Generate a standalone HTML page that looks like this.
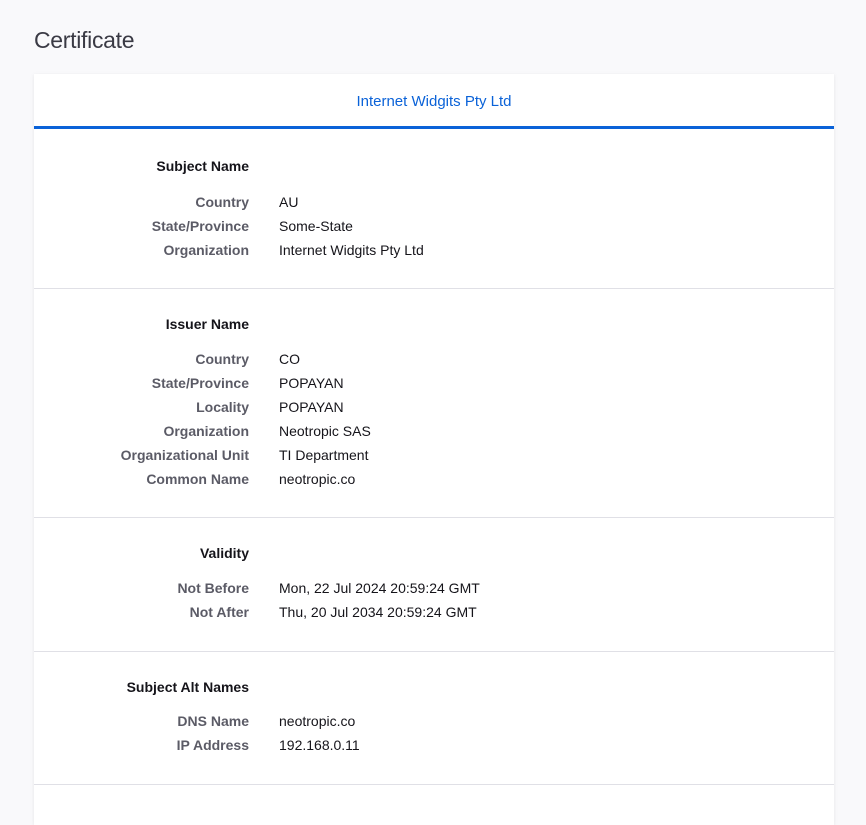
<!DOCTYPE html>
<html><head><meta charset="utf-8"><style>
html,body{margin:0;padding:0;background:#f9f9fb;width:866px;height:789px;overflow:hidden;font-family:"Liberation Sans",sans-serif;}
h1{position:absolute;left:34px;top:25px;margin:0;font-size:23px;font-weight:300;color:#3a3a44;line-height:30px;letter-spacing:-0.3px}
.card{position:absolute;left:34px;top:74px;width:800px;background:#fff;box-shadow:0 1px 4px rgba(0,0,0,0.08);}
.tab{height:52px;line-height:56px;text-align:center;color:#0a62d8;font-size:15px;border-bottom:3px solid #0a62d8;}
.sec{border-bottom:1px solid #e0e0e6;padding:25px 0 26px;}
.sec.s1{padding-top:27px}
.hd{height:20px;line-height:20px;font-size:14px;font-weight:bold;color:#15141a;width:215px;text-align:right;margin-bottom:13px}
.s1 .hd{margin-bottom:14px}
.s4 .hd{margin-bottom:12px}
.s3,.s4{padding-bottom:27px}
.row{height:24px;line-height:24px;font-size:14px;display:flex}
.l{width:215px;text-align:right;font-weight:bold;color:#5b5b66}
.v{margin-left:30px;color:#15141a}
</style></head><body>
<h1>Certificate</h1>
<div class="card">
<div class="tab">Internet Widgits Pty Ltd</div>
<div class="sec s1"><div class="hd">Subject Name</div>
<div class="row"><div class="l">Country</div><div class="v">AU</div></div>
<div class="row"><div class="l">State/Province</div><div class="v">Some-State</div></div>
<div class="row"><div class="l">Organization</div><div class="v">Internet Widgits Pty Ltd</div></div>
</div>
<div class="sec s2"><div class="hd">Issuer Name</div>
<div class="row"><div class="l">Country</div><div class="v">CO</div></div>
<div class="row"><div class="l">State/Province</div><div class="v">POPAYAN</div></div>
<div class="row"><div class="l">Locality</div><div class="v">POPAYAN</div></div>
<div class="row"><div class="l">Organization</div><div class="v">Neotropic SAS</div></div>
<div class="row"><div class="l">Organizational Unit</div><div class="v">TI Department</div></div>
<div class="row"><div class="l">Common Name</div><div class="v">neotropic.co</div></div>
</div>
<div class="sec s3"><div class="hd">Validity</div>
<div class="row"><div class="l">Not Before</div><div class="v">Mon, 22 Jul 2024 20:59:24 GMT</div></div>
<div class="row"><div class="l">Not After</div><div class="v">Thu, 20 Jul 2034 20:59:24 GMT</div></div>
</div>
<div class="sec s4"><div class="hd">Subject Alt Names</div>
<div class="row"><div class="l">DNS Name</div><div class="v">neotropic.co</div></div>
<div class="row"><div class="l">IP Address</div><div class="v">192.168.0.11</div></div>
</div>
<div style="height:40px"></div>
</div>
</body></html>
